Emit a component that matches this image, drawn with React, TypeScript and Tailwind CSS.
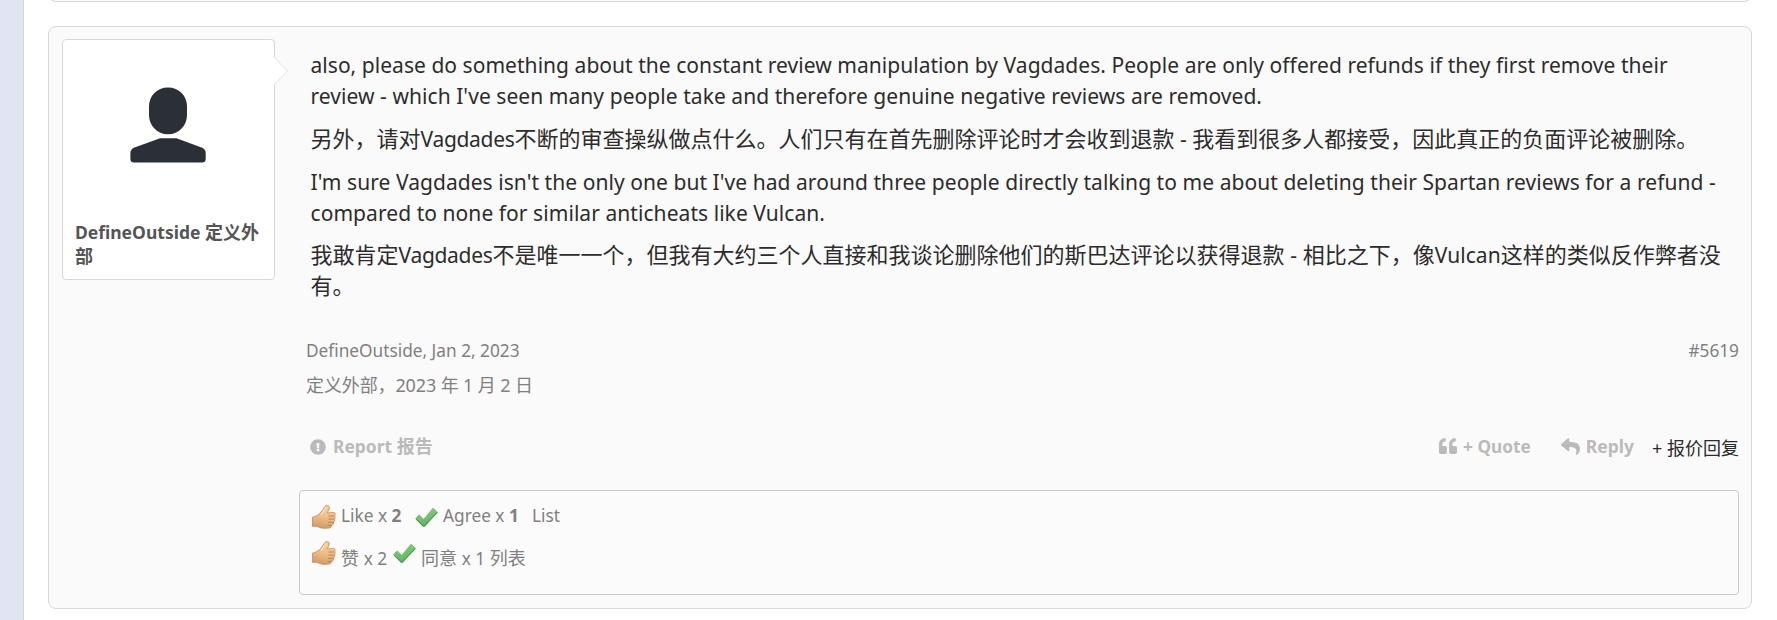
import type { ReactNode } from "react";
import { FaExclamationCircle, FaQuoteLeft, FaReply } from "react-icons/fa";

function Avatar() {
  return (
    <svg width="76" height="76" viewBox="0 0 76 76" className="ml-[67px] block" fill="#2b2f36">
      <path d="M38 .4C49 .4 57 8.500 57 19.500V28C57 38.500 49 47.300 38 47.300S19 38.500 19 28V19.500C19 8.500 27 .4 38 .4Z" />
      <path d="M30 51.300H46.500L71.500 60.600Q75.700 62.600 75.700 66V72Q75.700 75.600 72 75.600H4Q.4 75.600 .4 72V66Q.4 62.600 4.500 60.600Z" />
    </svg>
  );
}

function ThumbIcon({ className = "" }: { className?: string }) {
  return (
    <svg width="24" height="24" viewBox="0 0 24 24" className={`block shrink-0 ${className}`}>
      <defs>
        <linearGradient id="skin" x1="0.6" y1="0" x2="0.35" y2="1">
          <stop offset="0" stopColor="#f8cf9c" />
          <stop offset="0.5" stopColor="#efbd87" />
          <stop offset="1" stopColor="#cf9a68" />
        </linearGradient>
      </defs>
      <path
        d="M.4 12.200C3 11.700 5.800 10.400 8 8.300C10 6.300 11 4 13 1.500C14.400 -.1 17.600 .4 17.300 3C17.100 4.700 15.900 6.200 15.300 7.800C17.200 8.200 20 7.100 21.800 7.500C23.500 8 23.500 10.300 22.500 10.900C23.500 11.600 23.300 13.500 22.300 14C22.900 15 22.500 16.600 21.500 17.200C21.900 18.600 21.100 20 19.500 20.500C19.700 22 18.500 23 16.500 23.100C11.500 23.500 8 23.100 6 21.700C4 21 2 21 .4 21.500Z"
        fill="url(#skin)"
        stroke="#c58c5b"
        strokeWidth="0.9"
      />
      <path d="M22 11H16.500M22 14.100H16.500M21.300 17.300H16M19.400 20.400H15.500" stroke="#b67b4b" strokeWidth="0.9" fill="none" />
      <path d="M9 9.500C11.500 7 12.500 4 14.300 2.300" stroke="#fde2bd" strokeWidth="1.2" fill="none" />
    </svg>
  );
}

function CheckIcon({ className = "" }: { className?: string }) {
  return (
    <svg width="24" height="24" viewBox="0 0 24 24" className={`block shrink-0 ${className}`}>
      <defs>
        <linearGradient id="leaf" x1="0" y1="0" x2="0.3" y2="1">
          <stop offset="0" stopColor="#8ed083" />
          <stop offset="1" stopColor="#62b560" />
        </linearGradient>
      </defs>
      <path d="M.8 13.300L4.200 9.900L8.800 14.300L18 3.200L22.300 7L9.400 21.100L8 21.100Z" fill="url(#leaf)" stroke="#79bd74" strokeWidth="0.9" strokeLinejoin="round" />
      <path d="M1.200 14.100L8.200 21.100H9.300L22.300 7.400" stroke="#479a4c" strokeWidth="1.100" fill="none" />
    </svg>
  );
}

function Body({ children, className = "tracking-[0.04px]" }: { children: ReactNode; className?: string }) {
  return <span className={`text-[21px] leading-none ${className}`}>{children}</span>;
}

function Small({ children, className = "text-[17.250px]" }: { children: ReactNode; className?: string }) {
  return <span className={`leading-none ${className}`}>{children}</span>;
}

export default function App() {
  return (
    <div className="flex h-[620px] w-[1777px] overflow-hidden bg-white font-['Noto_Sans','Noto_Sans_CJK_SC',sans-serif] text-[18px] leading-[24px]">
      <div className="w-6 shrink-0 border-r border-[#d5d6de] bg-[#e1e4f3]" />
      <main className="flex flex-col pl-6">
        <div className="h-[2px] w-[1704px] shrink-0 overflow-hidden">
          <div className="-mt-[18px] h-5 rounded-lg border border-[#d7d7d7] bg-[#fafafa]" />
        </div>
        <article className="mt-6 flex h-[583px] w-[1704px] shrink-0 items-start rounded-lg border border-[#d7d7d7] bg-[#fafafa] pt-3 pr-3 pl-[13px]">
          <aside className="relative h-[241px] w-[213px] shrink-0 rounded-[4px] border border-[#d7d7d7] bg-white pt-[47px]">
            <Avatar />
            <div className="mt-[57px] pr-3 pl-[12px] font-bold text-[#555]">
              <Small className="text-[17.500px]">DefineOutside</Small> 定义外部
            </div>
            <svg width="16" height="30" viewBox="0 0 16 30" className="absolute top-[16px] left-[210px]">
              <path d="M0 1H1L14.500 15L1 29H0Z" fill="#fff" />
              <path d="M.8 1L14.500 15L.8 29" fill="none" stroke="#dfdfdf" />
            </svg>
          </aside>

          <div className="ml-6 flex min-w-0 flex-1 flex-col">
            <div className="flex flex-col gap-3 pt-[10px] pl-[11.500px] text-[22px] leading-[31px] whitespace-nowrap text-[#2c2c2c]">
              <p>
                <Body>also, please do something about the constant review manipulation by Vagdades. People are only offered refunds if they first remove their</Body>
                <br />
                <Body className="tracking-[0.06px]">review - which I've seen many people take and therefore genuine negative reviews are removed.</Body>
              </p>
              <p>
                另外，请对<Body className="tracking-[-0.3px]">Vagdades</Body>不断的审查操纵做点什么。人们只有在首先删除评论时才会收到退款<Body> - </Body>我看到很多人都接受，因此真正的负面评论被删除。
              </p>
              <p>
                <Body className="tracking-[0.055px]">I'm sure Vagdades isn't the only one but I've had around three people directly talking to me about deleting their Spartan reviews for a refund -</Body>
                <br />
                <Body className="tracking-[0.06px]">compared to none for similar anticheats like Vulcan.</Body>
              </p>
              <p className="-mt-px">
                我敢肯定<Body className="tracking-[-0.3px]">Vagdades</Body>不是唯一一个，但我有大约三个人直接和我谈论删除他们的斯巴达评论以获得退款<Body className="tracking-[0.2px]"> - </Body>相比之下，像<Body>Vulcan</Body>这样的类似反作弊者没
                <br />
                有。
              </p>
            </div>

            <div className="mt-[37px] flex justify-between pl-[7px] text-[#808080]">
              <div><Small>DefineOutside, Jan 2, 2023</Small></div>
              <div><Small>#5619</Small></div>
            </div>
            <div className="mt-[11px] pl-[7px] tracking-[-0.12px] text-[#808080]">定义外部，2023 年 1 月 2 日</div>

            <div className="mt-[37px] flex h-6 items-start font-bold text-[#bababa]">
              <FaExclamationCircle size={16} className="mt-[5px] ml-[11px]" />
              <div className="ml-[7px]">
                <Small className="text-[17.400px]">Report</Small> 报告
              </div>
              <FaQuoteLeft size={18} className="mt-[3px] ml-auto" />
              <div className="ml-[6px]"><Small className="text-[17.250px]">+ Quote</Small></div>
              <FaReply size={19} className="mt-[3px] ml-[30px]" />
              <div className="ml-[6px]"><Small className="text-[17.500px]">Reply</Small></div>
              <div className="mt-[2px] ml-[18px] font-normal text-[#2a2a2a]">+ 报价回复</div>
            </div>

            <div className="mt-8 flex h-[105px] flex-col rounded-[4px] border border-[#cacaca] bg-[#fbfbfb] pt-3 pl-3 text-[#808080]">
              <div className="flex h-6 items-start whitespace-nowrap">
                <ThumbIcon className="mt-[2px]" />
                <div className="ml-[5px] w-[74px]">
                  <Small>Like x <b>2</b></Small>
                </div>
                <CheckIcon className="mt-[2px]" />
                <div className="ml-1 w-[89px]">
                  <Small>Agree x <b>1</b></Small>
                </div>
                <div><Small>List</Small></div>
              </div>
              <div className="mt-[14px] flex items-start whitespace-nowrap">
                <ThumbIcon />
                <div className="mt-[5px] ml-[5px] w-[52px]">赞 <Small>x 2</Small></div>
                <CheckIcon />
                <div className="mt-[5px] ml-1">同意 <Small>x 1</Small> 列表</div>
              </div>
            </div>
          </div>
        </article>
      </main>
    </div>
  );
}
